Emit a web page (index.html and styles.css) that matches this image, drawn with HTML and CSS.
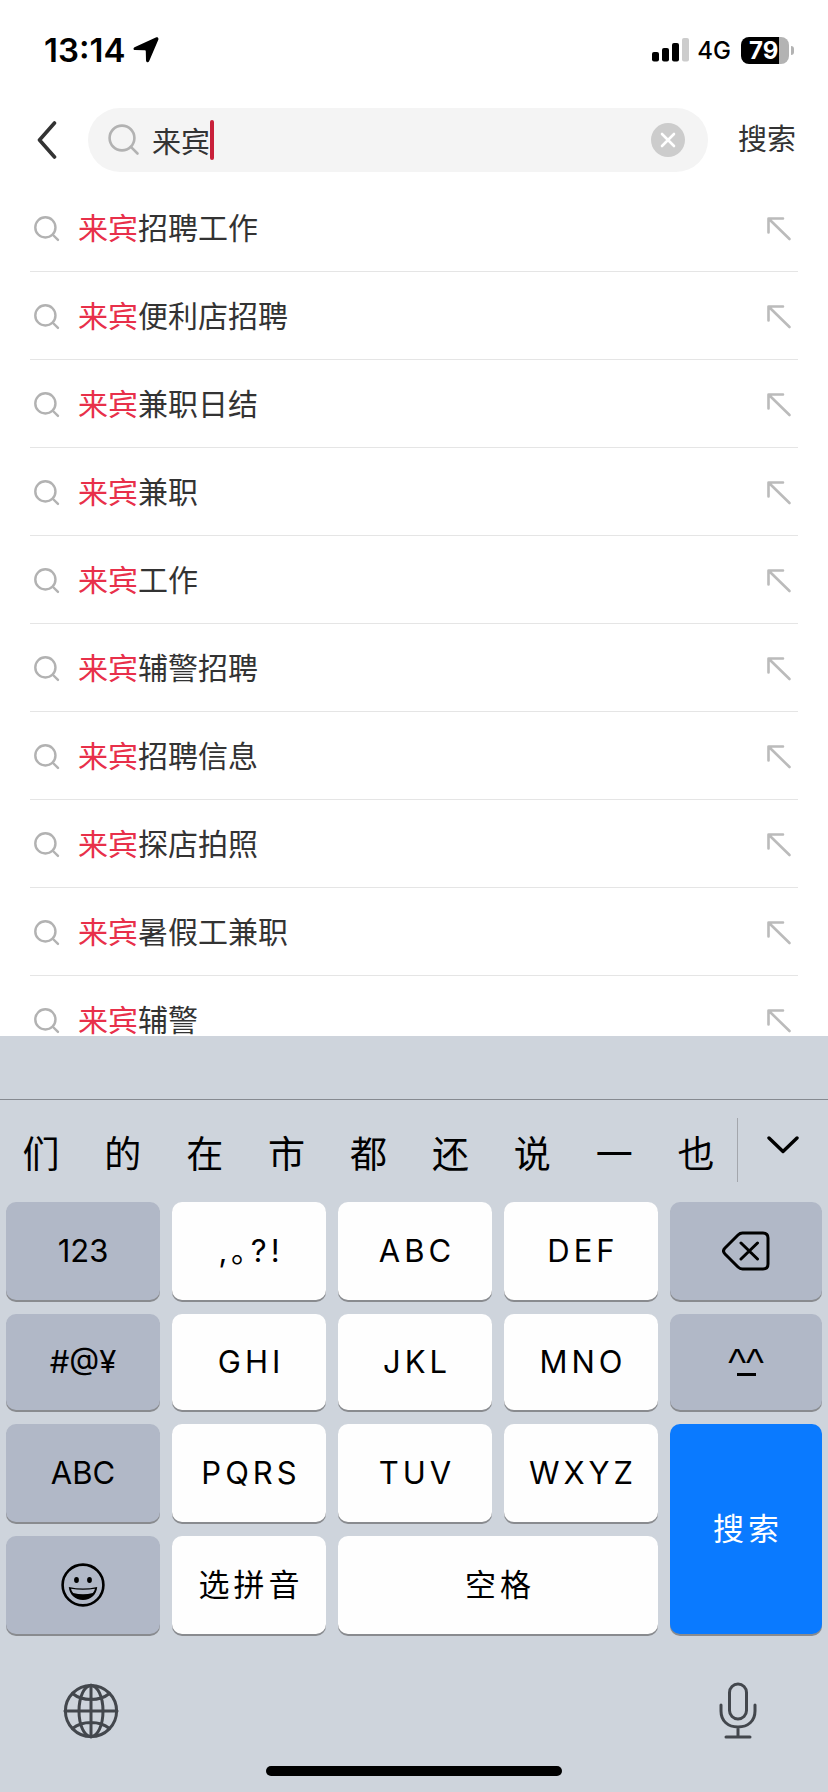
FILE: index.html
```html
<!DOCTYPE html>
<html lang="zh-CN">
<head>
<meta charset="utf-8">
<meta name="viewport" content="width=device-width, initial-scale=1">
<title>搜索</title>
<link rel="stylesheet" href="styles.css">
</head>
<body>
<svg class="defs" width="0" height="0" aria-hidden="true">
  <symbol id="magnifier" viewBox="0 0 32 32"><circle cx="14" cy="14" r="12.4"/><path d="M23.4 23.4 29.5 29.5"/></symbol>
  <symbol id="fill-arrow" viewBox="0 0 26 26"><path d="M2.5 16.500V2.500H17M3 3 23.500 23"/></symbol>
</svg>
<div class="app">
  <header class="status">
    <div class="status-side">
      <span class="clock">13:14</span>
      <svg class="location" viewBox="0 0 26 26" width="26" height="26" aria-hidden="true"><path d="M22.800.6 1.500 10.200C0 11 .2 13 2 13.100L11.600 13.300C12.400 13.300 12.800 13.700 12.800 14.400L13 23.200C13.200 25.600 15.400 25.900 16.200 24L25.200 3C26 1 24.600-.2 22.800.6Z"/></svg>
    </div>
    <div class="status-side">
      <svg class="signal" viewBox="0 0 37 24" width="37" height="24" aria-hidden="true"><rect y="14" width="7" height="9.500" rx="2"/><rect x="10" y="10" width="7" height="13.500" rx="2"/><rect x="20" y="5" width="7" height="18.500" rx="2"/><rect class="weak" x="30" y="0" width="7" height="23.500" rx="2"/></svg>
      <span class="network">4G</span>
      <span class="battery"><span class="battery-body">79</span><span class="battery-nub"></span></span>
    </div>
  </header>

  <form class="search" onsubmit="return false">
    <button class="back" type="button" aria-label="返回"><svg viewBox="0 0 20 38" width="20" height="38"><path d="M17.500 2 2.500 19 17.500 36"/></svg></button>
    <div class="field">
      <svg class="icon field-icon"><use href="#magnifier"/></svg>
      <div class="entry"><input type="text" value="来宾" aria-label="搜索内容"><span class="caret"></span></div>
      <button class="clear" type="button" aria-label="清除"><svg viewBox="0 0 34 34" width="34" height="34"><circle cx="17" cy="17" r="17"/><path d="M11 11 23 23M23 11 11 23"/></svg></button>
    </div>
    <button class="submit" type="submit">搜索</button>
  </form>

  <ul class="suggestions">
    <li><a href="#"><svg class="icon"><use href="#magnifier"/></svg><span class="term"><em>来宾</em>招聘工作</span><svg class="arrow"><use href="#fill-arrow"/></svg></a></li>
    <li><a href="#"><svg class="icon"><use href="#magnifier"/></svg><span class="term"><em>来宾</em>便利店招聘</span><svg class="arrow"><use href="#fill-arrow"/></svg></a></li>
    <li><a href="#"><svg class="icon"><use href="#magnifier"/></svg><span class="term"><em>来宾</em>兼职日结</span><svg class="arrow"><use href="#fill-arrow"/></svg></a></li>
    <li><a href="#"><svg class="icon"><use href="#magnifier"/></svg><span class="term"><em>来宾</em>兼职</span><svg class="arrow"><use href="#fill-arrow"/></svg></a></li>
    <li><a href="#"><svg class="icon"><use href="#magnifier"/></svg><span class="term"><em>来宾</em>工作</span><svg class="arrow"><use href="#fill-arrow"/></svg></a></li>
    <li><a href="#"><svg class="icon"><use href="#magnifier"/></svg><span class="term"><em>来宾</em>辅警招聘</span><svg class="arrow"><use href="#fill-arrow"/></svg></a></li>
    <li><a href="#"><svg class="icon"><use href="#magnifier"/></svg><span class="term"><em>来宾</em>招聘信息</span><svg class="arrow"><use href="#fill-arrow"/></svg></a></li>
    <li><a href="#"><svg class="icon"><use href="#magnifier"/></svg><span class="term"><em>来宾</em>探店拍照</span><svg class="arrow"><use href="#fill-arrow"/></svg></a></li>
    <li><a href="#"><svg class="icon"><use href="#magnifier"/></svg><span class="term"><em>来宾</em>暑假工兼职</span><svg class="arrow"><use href="#fill-arrow"/></svg></a></li>
    <li><a href="#"><svg class="icon"><use href="#magnifier"/></svg><span class="term"><em>来宾</em>辅警</span><svg class="arrow"><use href="#fill-arrow"/></svg></a></li>
  </ul>

  <section class="keyboard" aria-label="键盘">
    <div class="toolbar"></div>
    <div class="candidates">
      <div class="words">
        <button type="button">们</button><button type="button">的</button><button type="button">在</button><button type="button">市</button><button type="button">都</button><button type="button">还</button><button type="button">说</button><button type="button">一</button><button type="button">也</button>
      </div>
      <button class="expand" type="button" aria-label="展开候选"><svg viewBox="0 0 32 18" width="32" height="18"><path d="M2 2 16 15.500 30 2"/></svg></button>
    </div>
    <div class="keys">
      <button class="key dark" type="button">123</button>
      <button class="key spaced" type="button">,｡?!</button>
      <button class="key spaced" type="button">ABC</button>
      <button class="key spaced" type="button">DEF</button>
      <button class="key dark" type="button" aria-label="删除"><svg class="line" viewBox="0 0 48 40" width="48" height="40"><path d="M20.500 2H41Q46 2 46 7V33Q46 38 41 38H20.500Q18 38 16 36L3 23Q0 20 3 17L16 4Q18 2 20.500 2ZM19 12 35.500 28M35.500 12 19 28"/></svg></button>

      <button class="key dark" type="button">#@¥</button>
      <button class="key spaced" type="button">GHI</button>
      <button class="key spaced" type="button">JKL</button>
      <button class="key spaced" type="button">MNO</button>
      <button class="key dark face" type="button" aria-label="颜文字"><span>^^</span><i></i></button>

      <button class="key dark" type="button">ABC</button>
      <button class="key spaced" type="button">PQRS</button>
      <button class="key spaced" type="button">TUV</button>
      <button class="key spaced" type="button">WXYZ</button>
      <button class="key go hanzi" type="button">搜索</button>

      <button class="key dark" type="button" aria-label="表情"><svg viewBox="0 0 44 44" width="44" height="44"><circle cx="22" cy="22" r="20.400" fill="none" stroke="currentColor" stroke-width="2.600"/><ellipse cx="15.500" cy="17" rx="2.400" ry="2.900"/><ellipse cx="28.500" cy="17" rx="2.400" ry="2.900"/><path d="M7.800 24Q22 27 36.200 24C35.500 31.500 30 37 22 37S8.500 31.500 7.800 24Z"/><path class="teeth" d="M10 25.700Q22 28 34 25.700Q33.300 28.500 31.800 30Q22 32.500 12.200 30Q10.700 28.500 10 25.700Z"/></svg></button>
      <button class="key hanzi" type="button">选拼音</button>
      <button class="key hanzi space" type="button">空格</button>
    </div>
    <div class="dock">
      <button type="button" aria-label="切换键盘"><svg class="line" viewBox="0 0 56 56" width="56" height="56"><circle cx="28" cy="28" r="25.600"/><ellipse cx="28" cy="28" rx="12" ry="25.600"/><path d="M28 2V54M2 28H54M9.500 10.500Q17 16.500 28 16.500T46.500 10.500M9.500 45.500Q17 39.500 28 39.500T46.500 45.500"/></svg></button>
      <button type="button" aria-label="语音输入"><svg class="line" viewBox="0 0 40 58" width="40" height="58"><rect x="11.500" y="2" width="17" height="35" rx="8.500"/><path d="M3 23V29C3 39 10 45 20 45S37 39 37 29V23M20 45V55M8 55H32"/></svg></button>
    </div>
    <div class="home"></div>
  </section>
</div>
</body>
</html>
```

FILE: styles.css
```css
* { box-sizing: border-box; }

body {
  margin: 0;
  background: #fff;
  color: #333;
  font-family: Inter, "Noto Sans CJK SC", sans-serif;
}

button {
  padding: 0;
  border: 0;
  background: none;
  color: inherit;
  font: inherit;
  cursor: pointer;
}

svg { display: block; flex: none; }
.defs { position: absolute; }

.app {
  display: flex;
  flex-direction: column;
  height: 100vh;
}

/* Status bar */
.status {
  display: flex;
  flex: none;
  justify-content: space-between;
  height: 108px;
  padding: 30px 34px 0 44px;
  color: #000;
}
.status-side { display: flex; align-items: center; height: 40px; }
.clock { font-size: 33px; font-weight: 600; }
.location { margin-left: 8px; }
.network { margin: 0 10px 0 8px; font-size: 24px; font-weight: 500; }
.signal .weak { fill: #ccc; }
.battery { display: flex; align-items: center; gap: 2px; }
.battery-body {
  width: 48px;
  height: 27px;
  padding-left: 8px;
  border-radius: 8px;
  background: linear-gradient(90deg, #000 79%, #b3b3b3 79%);
  color: #fff;
  font-size: 24px;
  font-weight: 700;
  line-height: 27px;
}
.battery-nub { width: 3px; height: 9px; border-radius: 0 4px 4px 0; background: #b3b3b3; }

/* Search bar */
.search {
  display: flex;
  flex: none;
  align-items: center;
  height: 64px;
  margin-bottom: 12px;
  padding: 0 32px 0 37px;
  font-size: 29px;
}
.back { margin-right: 31px; }
.back path { fill: none; stroke: #333; stroke-width: 3.6; stroke-linecap: round; stroke-linejoin: round; }
.field {
  display: flex;
  flex: 1;
  align-items: center;
  min-width: 0;
  height: 64px;
  padding: 0 23px 0 20px;
  border-radius: 32px;
  background: #f4f4f4;
}
.icon { width: 26px; height: 26px; fill: none; stroke: #b2b2b2; stroke-width: 3; stroke-linecap: round; }
.field-icon { width: 32px; height: 32px; stroke-width: 2.600; }
.entry { position: relative; flex: 1; min-width: 0; margin-left: 12px; }
.entry input {
  display: block;
  width: 100%;
  height: 40px;
  padding: 0;
  border: 0;
  outline: 0;
  background: none;
  color: #333;
  font: inherit;
}
.caret { position: absolute; top: 0; left: 2em; width: 4px; height: 40px; border-radius: 2px; background: #c8203a; }
.clear circle { fill: #ccc; }
.clear path { stroke: #fff; stroke-width: 2.600; stroke-linecap: round; }
.submit { margin-left: 30px; line-height: 32px; }

/* Suggestions */
.suggestions {
  flex: 1;
  min-height: 0;
  margin: 0;
  padding: 0 30px;
  overflow: hidden;
  list-style: none;
}
.suggestions a {
  display: flex;
  align-items: center;
  height: 88px;
  padding: 0 6px 0 4px;
  border-bottom: 1px solid #e5e5e5;
  color: #333;
  font-size: 30px;
  line-height: 30px;
  text-decoration: none;
}
.suggestions .icon, .suggestions .arrow { margin-top: 2px; }
.term { flex: 1; margin-left: 18px; }
.term em { color: #e8304a; font-style: normal; }
.arrow { width: 26px; height: 26px; fill: none; stroke: #bbb; stroke-width: 2.600; stroke-linecap: round; stroke-linejoin: round; }

/* Keyboard */
.keyboard { flex: none; background: #ced4dc; color: #000; }
.toolbar { height: 64px; border-bottom: 1px solid #868a91; }
.candidates { display: flex; height: 102px; padding-top: 18px; }
.words { display: grid; flex: 1; grid-template-columns: repeat(9, 1fr); height: 64px; border-right: 1px solid #a3a6ac; }
.words button { padding-top: 10px; font-size: 37px; line-height: 54px; }
.expand { display: flex; justify-content: center; width: 90px; height: 64px; padding-top: 18px; }
.expand path { fill: none; stroke: #000; stroke-width: 3.400; stroke-linecap: round; stroke-linejoin: round; }
.keys {
  display: grid;
  grid-template-columns: repeat(4, minmax(0, 154fr)) minmax(0, 152fr);
  grid-template-rows: 98px 96px 98px 98px;
  gap: 14px 12px;
  padding: 0 6px;
}
.key {
  display: flex;
  align-items: center;
  justify-content: center;
  border-radius: 10px;
  background: #fefefe;
  box-shadow: 0 2px 0 #898b8f;
  font-size: 31px;
  line-height: 32px;
}
.dark { background: #b1b8c7; }
.spaced { padding-left: 4px; letter-spacing: 4px; }
.hanzi { padding-left: 4px; letter-spacing: 4px; }
.space { grid-column: span 2; }
.go { grid-column: 5; grid-row: 3 / span 2; background: #0a7aff; color: #fff; }
.line { fill: none; stroke: currentColor; stroke-width: 3; stroke-linecap: round; stroke-linejoin: round; }
.face { flex-direction: column; gap: 5px; padding-bottom: 4px; }
.face span { height: 24px; font-family: "Liberation Sans", sans-serif; font-size: 38px; line-height: 38px; }
.face i { width: 19px; height: 3px; background: #000; }
.teeth { fill: #b1b8c7; }
.dock {
  display: flex;
  align-items: center;
  justify-content: space-between;
  height: 132px;
  padding: 22px 70px 0 63px;
  color: #43474d;
}
.home { width: 296px; height: 10px; margin: 0 auto 16px; border-radius: 5px; background: #000; }
```
